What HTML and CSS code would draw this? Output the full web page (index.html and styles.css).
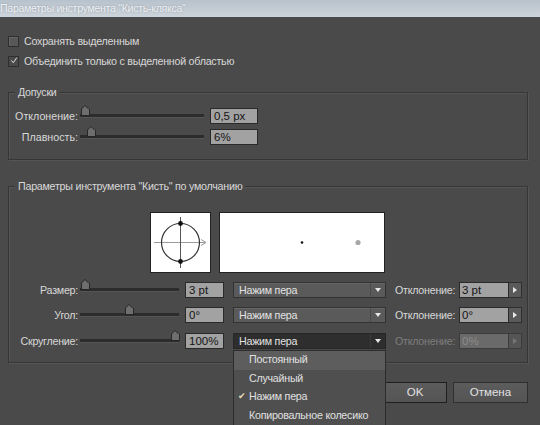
FILE: index.html
```html
<!DOCTYPE html>
<html lang="ru">
<head>
<meta charset="utf-8">
<title>Кисть-клякса</title>
<link rel="stylesheet" href="styles.css">
</head>
<body>
<div class="window">
  <div class="titlebar">Параметры инструмента "Кисть-клякса"</div>
  <div class="content">
    <div class="checks">
      <label class="check"><span class="box"></span>Сохранять выделенным</label>
      <label class="check"><span class="box checked"><svg width="11" height="11" viewBox="0 0 11 11"><path d="M2 5.5 L4.5 8.5 L9.5 1.5" fill="none" stroke="#e6e6e6" stroke-width="1.3"/></svg></span>Объединить только с выделенной областью</label>
    </div>

    <div class="group group-tol">
      <div class="legend">Допуски</div>
      <div class="row">
        <span class="lbl">Отклонение:</span>
        <div class="slider s-wide"><span class="thumb" style="left:1px"></span></div>
        <span class="input in-wide">0,5 px</span>
      </div>
      <div class="row">
        <span class="lbl">Плавность:</span>
        <div class="slider s-wide"><span class="thumb" style="left:7px"></span></div>
        <span class="input in-wide">6%</span>
      </div>
    </div>

    <div class="group group-brush">
      <div class="legend">Параметры инструмента "Кисть" по умолчанию</div>
      <div class="previews">
        <div class="pv pv-angle">
          <svg width="59" height="59" viewBox="0 0 59 59">
            <line x1="3" y1="29.5" x2="54" y2="29.5" stroke="#9a9a9a" stroke-width="1"/>
            <path d="M50 26.5 L55 29.5 L50 32.5" fill="none" stroke="#9a9a9a" stroke-width="1"/>
            <line x1="29.5" y1="4" x2="29.5" y2="55" stroke="#555" stroke-width="1"/>
            <circle cx="29.5" cy="29.5" r="19" fill="none" stroke="#333" stroke-width="1.2"/>
            <circle cx="29.5" cy="10.5" r="2.4" fill="#111"/>
            <circle cx="29.5" cy="48.5" r="2.4" fill="#111"/>
          </svg>
        </div>
        <div class="pv pv-size">
          <svg width="164" height="59" viewBox="0 0 164 59">
            <circle cx="82" cy="29.5" r="1.3" fill="#111"/>
            <circle cx="138" cy="29.5" r="2.6" fill="#a8a8a8"/>
          </svg>
        </div>
      </div>
      <div class="row brow">
        <span class="lbl">Размер:</span>
        <div class="slider s-short"><span class="thumb" style="left:1px"></span></div>
        <span class="input in-short">3 pt</span>
        <div class="select"><span>Нажим пера</span><span class="arr"></span></div>
        <span class="lbl2">Отклонение:</span>
        <span class="input in-var">3 pt</span><span class="stepper"></span>
      </div>
      <div class="row brow r2">
        <span class="lbl">Угол:</span>
        <div class="slider s-short"><span class="thumb" style="left:45px"></span></div>
        <span class="input in-short">0°</span>
        <div class="select"><span>Нажим пера</span><span class="arr"></span></div>
        <span class="lbl2">Отклонение:</span>
        <span class="input in-var">0°</span><span class="stepper"></span>
      </div>
      <div class="row brow r3">
        <span class="lbl">Скругление:</span>
        <div class="slider s-short"><span class="thumb" style="left:91px"></span></div>
        <span class="input in-short">100%</span>
        <div class="select open"><span>Нажим пера</span><span class="arr"></span>
          <div class="menu">
            <div class="item hl">Постоянный</div>
            <div class="item">Случайный</div>
            <div class="item"><span class="tick">✔</span>Нажим пера</div>
            <div class="item">Копировальное колесико</div>
          </div>
        </div>
        <span class="lbl2 dis">Отклонение:</span>
        <span class="input in-var dis">0%</span><span class="stepper dis"></span>
      </div>
    </div>

    <div class="buttons">
      <span class="btn ok">OK</span>
      <span class="btn cancel">Отмена</span>
    </div>
  </div>
</div>
</body>
</html>
```

FILE: styles.css
```css
html, body {
  margin: 0;
  padding: 0;
  background: #4a4a4a;
}
body {
  width: 540px;
  height: 425px;
  overflow: hidden;
  font-family: "Liberation Sans", Arial, sans-serif;
  font-size: 10.7px;
  letter-spacing: -0.25px;
  color: #d8d8d8;
}
.window {
  width: 540px;
  height: 425px;
  position: relative;
}
.titlebar {
  height: 17px;
  line-height: 16px;
  padding-left: 0;
  font-size: 10.6px;
  letter-spacing: -0.3px;
  color: #eef1f4;
  text-shadow: 0 0 2px rgba(60, 70, 80, 0.4);
  background: linear-gradient(#b8c2cc, #cdd4db);
  white-space: nowrap;
}
.content {
  padding: 14px 12px 0 8px;
}
.checks {
  display: flex;
  flex-direction: column;
}
.check {
  display: flex;
  align-items: center;
  height: 20px;
  gap: 4px;
}
.box {
  width: 9px;
  height: 9px;
  border: 1px solid #2e2e2e;
  background: #585858;
  box-shadow: inset 1px 1px 0 #666;
  display: inline-flex;
  align-items: center;
  justify-content: center;
  margin-right: 1px;
}
.box.checked {
  background: #4a4a4a;
  box-shadow: none;
}
.box svg {
  margin-top: -2px;
  margin-left: 1px;
}
.group {
  position: relative;
  width: 518px;
  border: 1px solid #363636;
  box-shadow: 1px 1px 0 #555, inset 1px 1px 0 #555;
}
.group-tol {
  margin-top: 21px;
  padding-top: 15px;
  padding-bottom: 14px;
}
.legend {
  position: absolute;
  top: -7px;
  left: 6px;
  padding: 0 3px;
  background: #4a4a4a;
  line-height: 13px;
}
.row {
  display: flex;
  align-items: center;
  height: 16px;
}
.group-tol .row + .row {
  margin-top: 5px;
}
.lbl {
  width: 69px;
  text-align: right;
  white-space: nowrap;
}
.group-tol .lbl {
  letter-spacing: 0;
}
.slider {
  position: relative;
  height: 3px;
  margin-left: 2px;
  background: #2c2c2c;
  border-bottom: 1px solid #555;
}
.s-wide { width: 124px; }
.s-short { width: 99px; }
.thumb {
  position: absolute;
  top: -5px;
  width: 7px;
  height: 6px;
  background: #6e6e6e;
  border: 1px solid #262626;
  border-top: none;
}
.thumb::before {
  content: "";
  position: absolute;
  left: -1px;
  top: -4px;
  width: 0;
  height: 0;
  border-left: 4.5px solid transparent;
  border-right: 4.5px solid transparent;
  border-bottom: 4px solid #262626;
}
.thumb::after {
  content: "";
  position: absolute;
  left: 0;
  top: -3px;
  width: 0;
  height: 0;
  border-left: 3.5px solid transparent;
  border-right: 3.5px solid transparent;
  border-bottom: 3px solid #6e6e6e;
}
.input {
  height: 14px;
  line-height: 14px;
  background: #a2a2a2;
  border: 1px solid #2a2a2a;
  color: #151515;
  padding-left: 3px;
  box-sizing: content-box;
  white-space: nowrap;
  font-size: 11.5px;
  letter-spacing: 0;
}
.in-wide {
  width: 43px;
  margin-left: 6px;
}
.group-brush {
  margin-top: 26px;
  padding-top: 25px;
  padding-bottom: 13px;
}
.previews {
  display: flex;
  margin-left: 141px;
  gap: 8px;
  margin-bottom: 9px;
}
.pv {
  background: #fff;
  border: 1px solid #222;
  height: 59px;
  display: flex;
}
.pv-angle { width: 59px; }
.pv-size { width: 164px; }
.r2 { margin-top: 9px; }
.r3 { margin-top: 10px; }
.in-short {
  width: 34px;
  margin-left: 6px;
}
.select {
  position: relative;
  margin-left: 9px;
  width: 151px;
  height: 14px;
  border: 1px solid #333;
  background: #5a5a5a;
  box-shadow: inset 0 1px 0 #666;
  display: flex;
  align-items: center;
}
.select > span:first-child {
  flex: 1;
  padding-left: 5px;
  color: #e2e2e2;
}
.select .arr {
  width: 14px;
  height: 14px;
  border-left: 1px solid #4c4c4c;
  position: relative;
}
.select .arr::after {
  content: "";
  position: absolute;
  left: 4px;
  top: 5px;
  border-left: 3.5px solid transparent;
  border-right: 3.5px solid transparent;
  border-top: 4px solid #e8e8e8;
}
.select.open {
  background: #2e2e2e;
  box-shadow: none;
  border-color: #262626;
}
.select.open .arr {
  border-left-color: #3a3a3a;
}
.menu {
  position: absolute;
  left: -1px;
  top: 16px;
  width: 151px;
  background: #4f4f4f;
  border: 1px solid #2c2c2c;
  height: 80px;
  z-index: 5;
}
.item {
  height: 18.5px;
  line-height: 17px;
  padding-left: 15px;
  position: relative;
  color: #e0e0e0;
  white-space: nowrap;
}
.item.hl {
  background: #5d5d5d;
}
.tick {
  position: absolute;
  left: 4px;
  top: 0;
  color: #e6dcb8;
  font-size: 9px;
}
.lbl2 {
  margin-left: 9px;
  width: 64px;
  white-space: nowrap;
}
.in-var {
  width: 46px;
  margin-left: 0;
  padding-left: 2px;
}
.stepper {
  width: 12px;
  height: 14px;
  border: 1px solid #2f2f2f;
  border-left: none;
  background: #5a5a5a;
  position: relative;
}
.stepper::after {
  content: "";
  position: absolute;
  left: 4px;
  top: 4px;
  border-top: 3px solid transparent;
  border-bottom: 3px solid transparent;
  border-left: 4px solid #e8e8e8;
}
.lbl2.dis { color: #7c7c7c; }
.input.dis {
  background: #6a6a6a;
  color: #8a8a8a;
  border-color: #3c3c3c;
}
.stepper.dis {
  background: #555;
  border-color: #3c3c3c;
}
.stepper.dis::after {
  border-left-color: #757575;
}
.buttons {
  display: flex;
  justify-content: flex-end;
  gap: 6px;
  margin-top: 19px;
}
.btn {
  height: 19px;
  line-height: 19px;
  text-align: center;
  background: linear-gradient(#5c5c5c, #545454);
  border: 1px solid #2f2f2f;
  color: #e2e2e2;
  font-size: 11.5px;
  letter-spacing: 0;
}
.btn.ok {
  width: 62px;
  border-color: #1f1f1f;
}
.btn.cancel {
  width: 73px;
}
```
